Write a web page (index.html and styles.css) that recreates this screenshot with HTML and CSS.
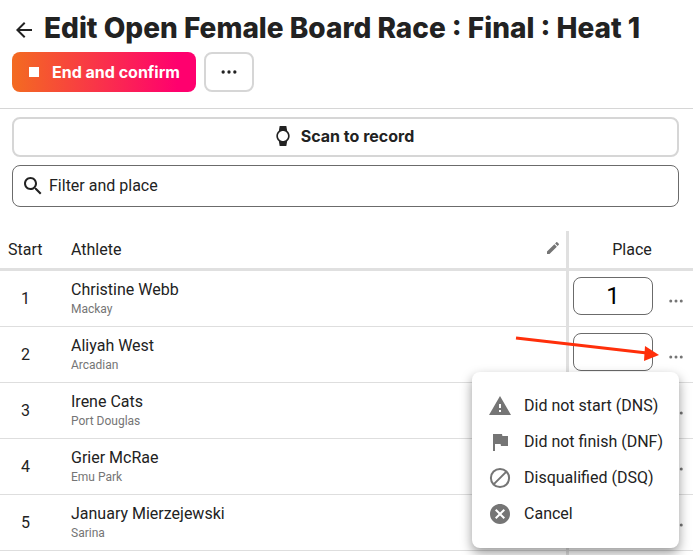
FILE: index.html
```html
<!DOCTYPE html>
<html lang="en">
<head>
<meta charset="utf-8">
<meta name="viewport" content="width=device-width, initial-scale=1">
<title>Edit Open Female Board Race : Final : Heat 1</title>
<link rel="stylesheet" href="styles.css">
</head>
<body>
<svg class="sprite" aria-hidden="true">
  <symbol id="dots" viewBox="0 0 24 24"><circle cx="5" cy="12" r="2"/><circle cx="12" cy="12" r="2"/><circle cx="19" cy="12" r="2"/></symbol>
</svg>
<header class="header">
  <div class="title-bar">
    <a class="back" href="#" aria-label="Back"><svg viewBox="0 0 24 24"><path d="M20 11H7.83l5.59-5.59L12 4l-8 8 8 8 1.41-1.41L7.83 13H20v-2z"/></svg></a>
    <h1 class="title">Edit Open Female Board Race : Final : Heat 1</h1>
  </div>
  <div class="actions">
    <button class="button primary" type="button"><span class="stop"></span>End and confirm</button>
    <button class="button outlined more" type="button" aria-label="More actions"><svg viewBox="0 0 24 24"><use href="#dots"/></svg></button>
  </div>
</header>
<main>
  <div class="tools">
    <button class="button outlined scan" type="button">
      <svg viewBox="0 0 24 24"><path d="M20 12c0-2.54-1.19-4.81-3.04-6.27L16 0H8l-.95 5.73C5.19 7.19 4 9.45 4 12s1.19 4.81 3.05 6.27L8 24h8l.96-5.73C18.81 16.81 20 14.54 20 12zM6 12c0-3.31 2.69-6 6-6s6 2.69 6 6-2.69 6-6 6-6-2.69-6-6z"/></svg>Scan to record
    </button>
    <label class="search">
      <svg viewBox="0 0 24 24" aria-hidden="true"><path d="M15.5 14h-.79l-.28-.27C15.41 12.59 16 11.11 16 9.5 16 5.91 13.09 3 9.5 3S3 5.91 3 9.5 5.91 16 9.5 16c1.61 0 3.09-.59 4.23-1.57l.27.28v.79l5 4.99L20.49 19l-4.99-5zm-6 0C7.01 14 5 11.99 5 9.5S7.01 5 9.5 5 14 7.01 14 9.5 11.99 14 9.5 14z"/></svg>
      <input type="search" placeholder="Filter and place" aria-label="Filter and place">
    </label>
  </div>
  <table class="entries">
    <colgroup><col class="col-start"><col><col class="col-place"></colgroup>
    <thead>
      <tr>
        <th scope="col">Start</th>
        <th class="athlete-cell" scope="col"><div class="athlete-head">Athlete<button class="edit" type="button" aria-label="Edit athletes"><svg viewBox="0 0 24 24"><path d="M3 17.25V21h3.75L17.81 9.94l-3.75-3.75L3 17.25zM20.71 7.04c.39-.39.39-1.02 0-1.41l-2.34-2.34c-.39-.39-1.02-.39-1.41 0l-1.83 1.83 3.75 3.75 1.83-1.83z"/></svg></button></div></th>
        <th class="place-head" scope="col">Place</th>
      </tr>
    </thead>
    <tbody>
      <tr>
        <td class="start">1</td>
        <td><div class="name">Christine Webb</div><div class="club">Mackay</div></td>
        <td class="place"><div class="place-row"><input type="text" value="1" aria-label="Place for Christine Webb"><button type="button" aria-label="Options for Christine Webb"><svg viewBox="0 0 24 24"><use href="#dots"/></svg></button></div></td>
      </tr>
      <tr>
        <td class="start">2</td>
        <td><div class="name">Aliyah West</div><div class="club">Arcadian</div></td>
        <td class="place">
          <div class="place-row"><input type="text" aria-label="Place for Aliyah West"><button type="button" aria-label="Options for Aliyah West" aria-expanded="true"><svg viewBox="0 0 24 24"><use href="#dots"/></svg></button>
            <div class="menu" role="menu">
              <button type="button" role="menuitem"><svg viewBox="0 0 24 24"><path d="M1 21h22L12 2 1 21zm12-3h-2v-2h2v2zm0-4h-2v-4h2v4z"/></svg>Did not start (DNS)</button>
              <button type="button" role="menuitem"><svg viewBox="0 0 24 24"><path d="M14.4 6L14 4H5v17h2v-7h5.6l.4 2h7V6z"/></svg>Did not finish (DNF)</button>
              <button type="button" role="menuitem"><svg viewBox="0 0 24 24"><path class="line" d="M5.6 18.4L18.4 5.6M12 2.9a9.1 9.1 0 1 0 0 18.200a9.100 9.100 0 1 0 0-18.200z"/></svg>Disqualified (DSQ)</button>
              <button type="button" role="menuitem"><svg viewBox="0 0 24 24"><path d="M12 2C6.470 2 2 6.470 2 12s4.470 10 10 10 10-4.470 10-10S17.530 2 12 2zm5 13.590L15.590 17 12 13.410 8.410 17 7 15.590 10.590 12 7 8.410 8.410 7 12 10.590 15.590 7 17 8.410 13.410 12 17 15.590z"/></svg>Cancel</button>
            </div>
            <svg class="pointer" viewBox="0 0 146 28" aria-hidden="true"><path d="M3 5L134 20" fill="none" stroke="#ff2f0a" stroke-width="3"/><path d="M132 13L146 22L131 28z" fill="#ff2f0a"/></svg>
          </div>
        </td>
      </tr>
      <tr>
        <td class="start">3</td>
        <td><div class="name">Irene Cats</div><div class="club">Port Douglas</div></td>
        <td class="place"><div class="place-row"><input type="text" aria-label="Place for Irene Cats"><button type="button" aria-label="Options for Irene Cats"><svg viewBox="0 0 24 24"><use href="#dots"/></svg></button></div></td>
      </tr>
      <tr>
        <td class="start">4</td>
        <td><div class="name">Grier McRae</div><div class="club">Emu Park</div></td>
        <td class="place"><div class="place-row"><input type="text" aria-label="Place for Grier McRae"><button type="button" aria-label="Options for Grier McRae"><svg viewBox="0 0 24 24"><use href="#dots"/></svg></button></div></td>
      </tr>
      <tr>
        <td class="start">5</td>
        <td><div class="name">January Mierzejewski</div><div class="club">Sarina</div></td>
        <td class="place"><div class="place-row"><input type="text" aria-label="Place for January Mierzejewski"><button type="button" aria-label="Options for January Mierzejewski"><svg viewBox="0 0 24 24"><use href="#dots"/></svg></button></div></td>
      </tr>
    </tbody>
    <tfoot aria-hidden="true"><tr><td></td><td></td><td></td></tr></tfoot>
  </table>
</main>
</body>
</html>
```

FILE: styles.css
```css
* { box-sizing: border-box; }

body {
  margin: 0;
  background: #fff;
  color: #222;
  font: 16px/24px Roboto, "Liberation Sans", sans-serif;
}

button, input { font: inherit; color: inherit; }
button { padding: 0; border: 0; background: none; cursor: pointer; }
svg { display: block; flex: none; fill: currentColor; }
.sprite { display: none; }

.header { padding: 8px 12px 16px; border-bottom: 1px solid #d6d6d6; }
.title-bar { display: flex; align-items: center; height: 44px; }
.back { color: #222; }
.back svg { width: 24px; height: 24px; }
.title {
  margin: 0 0 0 8px;
  padding-bottom: 4px;
  font: 800 28px/36px Inter, sans-serif;
  white-space: nowrap;
}

.actions { display: flex; gap: 8px; }
.button {
  display: flex;
  align-items: center;
  justify-content: center;
  height: 40px;
  padding-bottom: 2px;
  border-radius: 8px;
  font: 700 16px/24px Inter, sans-serif;
}
.primary {
  gap: 13px;
  padding: 0 16px 0 17px;
  background: linear-gradient(90deg, #f36b21, #ff006e 90%);
  color: #fff;
}
.stop { width: 10px; height: 10px; background: #fff; }
.outlined { border: 2px solid #d6d6d6; background: #fff; }
.more { width: 50px; padding: 0; }
.more svg { width: 20px; height: 20px; }

.tools { display: flex; flex-direction: column; gap: 8px; padding: 8px 14px 24px 12px; }
.scan { gap: 8px; padding-right: 4px; }
.scan svg { width: 20px; height: 20px; }
.search {
  display: flex;
  align-items: center;
  gap: 4px;
  height: 42px;
  padding: 0 8px;
  border: 1px solid #6b6b6b;
  border-radius: 8px;
}
.search svg { width: 24px; height: 24px; }
.search input { flex: 1; min-width: 0; padding: 0; border: 0; outline: 0; background: none; }
.search input::placeholder { color: #222; opacity: 1; }

.entries { width: 100%; table-layout: fixed; border-collapse: separate; border-spacing: 0; }
.col-start { width: 63px; }
.col-place { width: 127px; }
th { height: 40px; padding: 0 8px; border-bottom: 3px solid #e0e0e0; font-weight: 400; text-align: left; }
td { height: 56px; padding: 0 8px; border-bottom: 1px solid #dedede; }
th:last-child, td:last-child { border-left: 3px solid #e0e0e0; }
.athlete-cell { padding-right: 5px; }
.athlete-head { display: flex; align-items: center; justify-content: space-between; }
.edit { color: #757575; }
.edit svg { width: 16px; height: 16px; margin-bottom: 4px; }
th.place-head { padding: 0 6px 0 8px; text-align: center; }
td.start { padding: 0 12px 0 0; text-align: center; }
.name { line-height: 20px; }
.club { color: #757575; font-size: 12px; line-height: 18px; }
td.place { padding: 6px 4px 0; vertical-align: top; }
.place-row { position: relative; display: flex; align-items: flex-end; justify-content: space-between; }
.place-row > input {
  width: 80px;
  height: 38px;
  padding: 0;
  border: 1px solid #6b6b6b;
  border-radius: 8px;
  background: #fff;
  color: #000;
  font-size: 24px;
  text-align: center;
}
.place-row > button { padding: 5px 4px; color: #757575; }
.place-row > button svg { width: 18px; height: 18px; }

.menu {
  position: absolute;
  z-index: 1;
  top: 39px;
  right: 10px;
  padding: 16px;
  border-radius: 8px;
  background: #fff;
  box-shadow: 0 5px 12px rgba(0, 0, 0, 0.4);
}
.menu button { display: flex; align-items: center; gap: 12px; height: 36px; white-space: nowrap; }
.menu svg { width: 24px; height: 24px; color: #757575; }
.menu .line { fill: none; stroke: currentColor; stroke-width: 2; }
.pointer { position: absolute; z-index: 2; top: 0; right: 30px; width: 146px; height: 28px; }

tfoot td { height: 4px; padding: 0; border-bottom: 0; }
```
